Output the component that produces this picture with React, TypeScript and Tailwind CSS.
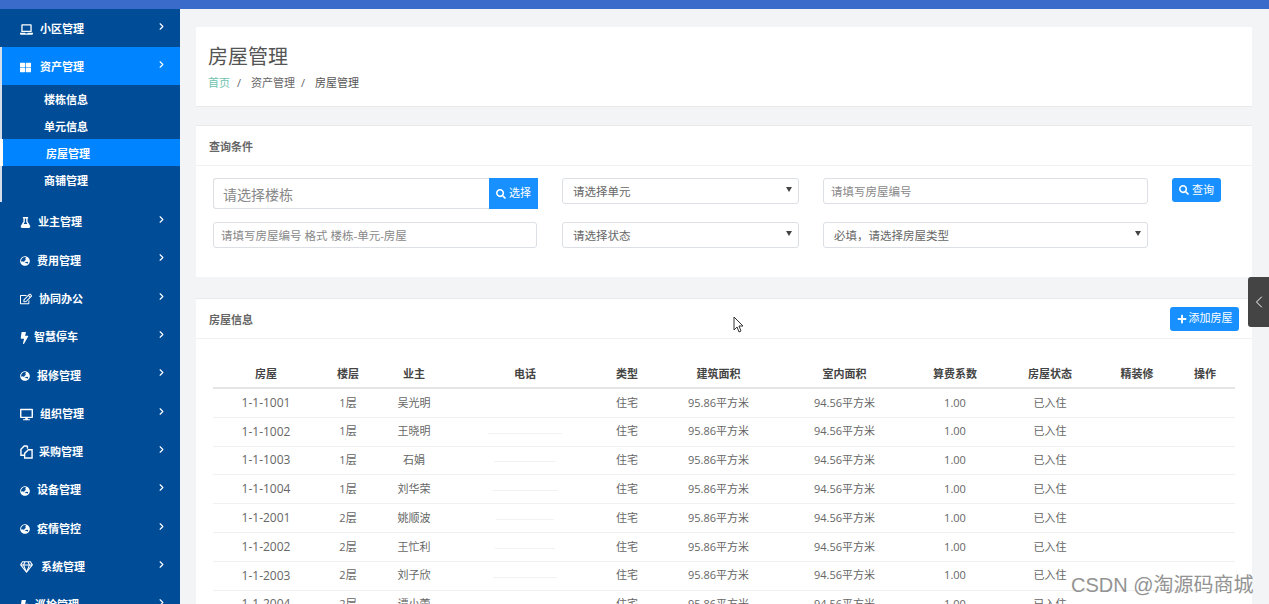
import { ChevronLeft, ChevronRight } from "lucide-react";
import {
  FaBolt,
  FaDesktop,
  FaFlask,
  FaGlobeAsia,
  FaLaptop,
  FaPlus,
  FaRegEdit,
  FaRegGem,
  FaSearch,
  FaThLarge,
} from "react-icons/fa";
import type { ReactNode } from "react";

const font = "font-['Open_Sans','Noto_Sans_CJK_SC',sans-serif]";

function FilesIcon() {
  return (
    <svg width="13" height="14" viewBox="0 0 14 15" fill="none" stroke="currentColor" strokeWidth="1.5">
      <path d="M8 1H4.5L1 4.5V11h4" />
      <path d="M8 1v3" />
      <path d="M9 5h4v9H5V9z" />
    </svg>
  );
}

const menuBottom = [
  { label: "业主管理", icon: <FaFlask className="w-[11px] h-[11px]" />, box: "w-[18px]" },
  { label: "费用管理", icon: <FaGlobeAsia className="w-[10px] h-[10px]" />, box: "w-[17px]" },
  { label: "协同办公", icon: <FaRegEdit className="w-[12px] h-[12px]" />, box: "w-[19px]" },
  { label: "智慧停车", icon: <FaBolt className="w-[9px] h-[12px]" />, box: "w-[14px]" },
  { label: "报修管理", icon: <FaGlobeAsia className="w-[10px] h-[10px]" />, box: "w-[17px]" },
  { label: "组织管理", icon: <FaDesktop className="w-[13px] h-[13px]" />, box: "w-[20px]" },
  { label: "采购管理", icon: <FilesIcon />, box: "w-[19px]" },
  { label: "设备管理", icon: <FaGlobeAsia className="w-[10px] h-[10px]" />, box: "w-[17px]" },
  { label: "疫情管控", icon: <FaGlobeAsia className="w-[10px] h-[10px]" />, box: "w-[17px]" },
  { label: "系统管理", icon: <FaRegGem className="w-[13px] h-[12px]" />, box: "w-[21px]" },
  { label: "巡检管理", icon: <FaBolt className="w-[9px] h-[12px]" />, box: "w-[15px]" },
];

const rows = [
  ["1-1-1001", "1层", "吴光明", "w-0"],
  ["1-1-1002", "1层", "王晓明", "w-[74px]"],
  ["1-1-1003", "1层", "石娟", "w-[62px]"],
  ["1-1-1004", "1层", "刘华荣", "w-[66px]"],
  ["1-1-2001", "2层", "姚顺波", "w-[58px]"],
  ["1-1-2002", "2层", "王忙利", "w-[60px]"],
  ["1-1-2003", "2层", "刘子欣", "w-[64px]"],
  ["1-1-2004", "2层", "谭小蕾", "w-[50px]"],
];

const columns = "grid grid-cols-[106px_58px_74px_148px_56px_127px_125px_96px_94px_80px_56px_2px] text-center";

function MenuItem({
  label,
  icon,
  box,
  top,
  active,
}: {
  label: string;
  icon: ReactNode;
  box: string;
  top?: boolean;
  active?: boolean;
}) {
  return (
    <div
      className={`flex items-center pr-[13px] pt-[3px] text-white text-[11px] font-bold shrink-0 ${top ? "h-[38px]" : "h-[38.3px]"} ${
        active ? "bg-[#0084ff] border-l-2 border-[#d5dfec] pl-[18px]" : "pl-5"
      }`}
    >
      <span className={`${box} flex items-center shrink-0`}>{icon}</span>
      <span className="flex-1">{label}</span>
      <ChevronRight className="w-[11px] h-[11px] -mt-[6px]" strokeWidth={2.5} />
    </div>
  );
}

function SubItem({ label, active }: { label: string; active?: boolean }) {
  return (
    <div
      className={`h-[27px] flex items-center pt-[3px] text-white text-[11px] font-bold ${
        active ? "bg-[#0084ff] pl-[43px] border-l-[3px] border-white -ml-[2px]" : "pl-[42px]"
      }`}
    >
      {label}
    </div>
  );
}

function Field({ text, select }: { text: string; select?: boolean }) {
  return (
    <div
      className={`h-[25.5px] flex items-center justify-between pt-px bg-white border border-[#dcdfe3] rounded-[3px] text-[11.5px] ${
        select ? "pl-[10px] pr-[6px] text-[#666]" : "pl-[7px] text-[#888]"
      }`}
    >
      <span>{text}</span>
      {select && (
        <svg width="6" height="5" viewBox="0 0 6 5" className="-mt-[3px]">
          <path d="M0 0h6L3 5z" fill="#444" />
        </svg>
      )}
    </div>
  );
}

function PanelHeader({ title, children }: { title: string; children?: ReactNode }) {
  return (
    <div className="h-10 flex items-center justify-between pl-[13px] pr-[13px] border-b border-[#f0f1f3] text-[11px] font-bold text-[#666]">
      <span className="mt-[3px]">{title}</span>
      {children}
    </div>
  );
}

export default function App() {
  return (
    <div className={`relative w-[1269px] h-[604px] overflow-hidden bg-[#f3f4f6] flex flex-col ${font}`}>
      <div className="h-[9px] bg-[#3a6bcb] shrink-0" />
      <div className="flex flex-1 min-h-0">
        <aside className="w-[180px] bg-[#004c97] shrink-0 overflow-hidden">
          <MenuItem label="小区管理" icon={<FaLaptop className="w-[13px] h-[13px]" />} box="w-[20px]" top />
          <MenuItem label="资产管理" icon={<FaThLarge className="w-[11px] h-[11px]" />} box="w-[20px]" top active />
          <div className="border-l-2 border-[#d5dfec] pb-[9px]">
            <SubItem label="楼栋信息" />
            <SubItem label="单元信息" />
            <SubItem label="房屋管理" active />
            <SubItem label="商铺管理" />
          </div>
          {menuBottom.map((m) => (
            <MenuItem key={m.label} {...m} />
          ))}
        </aside>

        <main className="flex-1 min-w-0 pt-[18px] pl-4 pr-[17px]">
          <section className="h-20 bg-white border-b border-[#e8e9eb] pl-3 pt-[17px]">
            <h1 className="text-[20px] leading-[26px] text-[#555]">房屋管理</h1>
            <div className="mt-[5px] flex items-center text-[11px] leading-[16px] text-[#666]">
              <span className="text-[#6fc3ae]">首页</span>
              <span className="ml-[7px] mr-[9px]">/</span>
              <span className="ml-[1px]">资产管理</span>
              <span className="ml-[6px] mr-[9px]">/</span>
              <span className="ml-[1px] text-[#555]">房屋管理</span>
            </div>
          </section>

          <section className="mt-[18px] h-[152px] bg-white border-t border-[#e8e9eb]">
            <PanelHeader title="查询条件" />
            <div className="pl-[17px] pt-[12px] grid grid-cols-[325px_237px_325px_49px] gap-x-6 gap-y-[13px] items-start">
              <div className="flex h-[31px]">
                <div className="flex-1 flex items-center pl-[9px] pt-px bg-white border border-[#dcdfe3] border-r-0 rounded-l-[3px] text-[14px] text-[#888]">
                  请选择楼栋
                </div>
                <div className="w-[49px] bg-[#1890ff] text-white text-[11px] flex items-center justify-center gap-[3px]">
                  <FaSearch className="w-[10px] h-[10px]" />
                  选择
                </div>
              </div>
              <Field text="请选择单元" select />
              <Field text="请填写房屋编号" />
              <div className="h-[24px] bg-[#1890ff] rounded-[3px] text-white text-[11px] flex items-center justify-center gap-[3px]">
                <FaSearch className="w-[10px] h-[10px]" />
                查询
              </div>
              <div className="pr-px">
                <Field text="请填写房屋编号 格式 楼栋-单元-房屋" />
              </div>
              <Field text="请选择状态" select />
              <Field text="必填，请选择房屋类型" select />
            </div>
          </section>

          <section className="mt-[21px] bg-white border-t border-[#e8e9eb] h-[400px]">
            <PanelHeader title="房屋信息">
              <div className="w-[69px] h-[24px] bg-[#1890ff] rounded-[3px] text-white text-[11px] font-normal flex items-center justify-center gap-[2px]">
                <FaPlus className="w-[10px] h-[10px]" />
                添加房屋
              </div>
            </PanelHeader>
            <div className="ml-[17px] w-[1022px] mt-[21px] text-[11px]">
              <div className={`${columns} h-[29px] pt-[2px] items-center font-bold text-[#444] border-b-2 border-[#e4e5e7]`}>
                {["房屋", "楼层", "业主", "电话", "类型", "建筑面积", "室内面积", "算费系数", "房屋状态", "精装修", "操作"].map((h) => (
                  <span key={h}>{h}</span>
                ))}
              </div>
              {rows.map(([room, floor, owner, phone]) => (
                <div key={room} className={`${columns} h-[28.8px] items-center text-[#666] border-b border-[#eef0f2]`}>
                  <span className="text-[12px]">{room}</span>
                  <span>{floor}</span>
                  <span>{owner}</span>
                  <span className="flex justify-center pt-[3px]">
                    <span className={`block h-px bg-[#f1f2f3] ${phone}`} />
                  </span>
                  <span>住宅</span>
                  <span>95.86平方米</span>
                  <span>94.56平方米</span>
                  <span>1.00</span>
                  <span>已入住</span>
                  <span />
                  <span />
                  <span />
                </div>
              ))}
            </div>
          </section>
        </main>
      </div>

      <div className="absolute right-0 top-[277px] w-[21px] h-[50px] bg-[#444] rounded-l-[3px] flex items-center justify-center text-white">
        <ChevronLeft className="w-[20px] h-[20px]" strokeWidth={1.2} />
      </div>

      <svg className="absolute left-[733px] top-[316px]" width="12" height="17" viewBox="0 0 12 17">
        <path d="M1 1v13l3-3 2 5 2-1-2-5h4z" fill="#fff" stroke="#333" strokeWidth="1" />
      </svg>

      <div className="absolute left-[1071px] top-[572px] text-[20px] leading-[26px] text-[#888] opacity-90 font-['Liberation_Sans','Noto_Sans_CJK_SC',sans-serif]">
        CSDN @淘源码商城
      </div>
    </div>
  );
}
